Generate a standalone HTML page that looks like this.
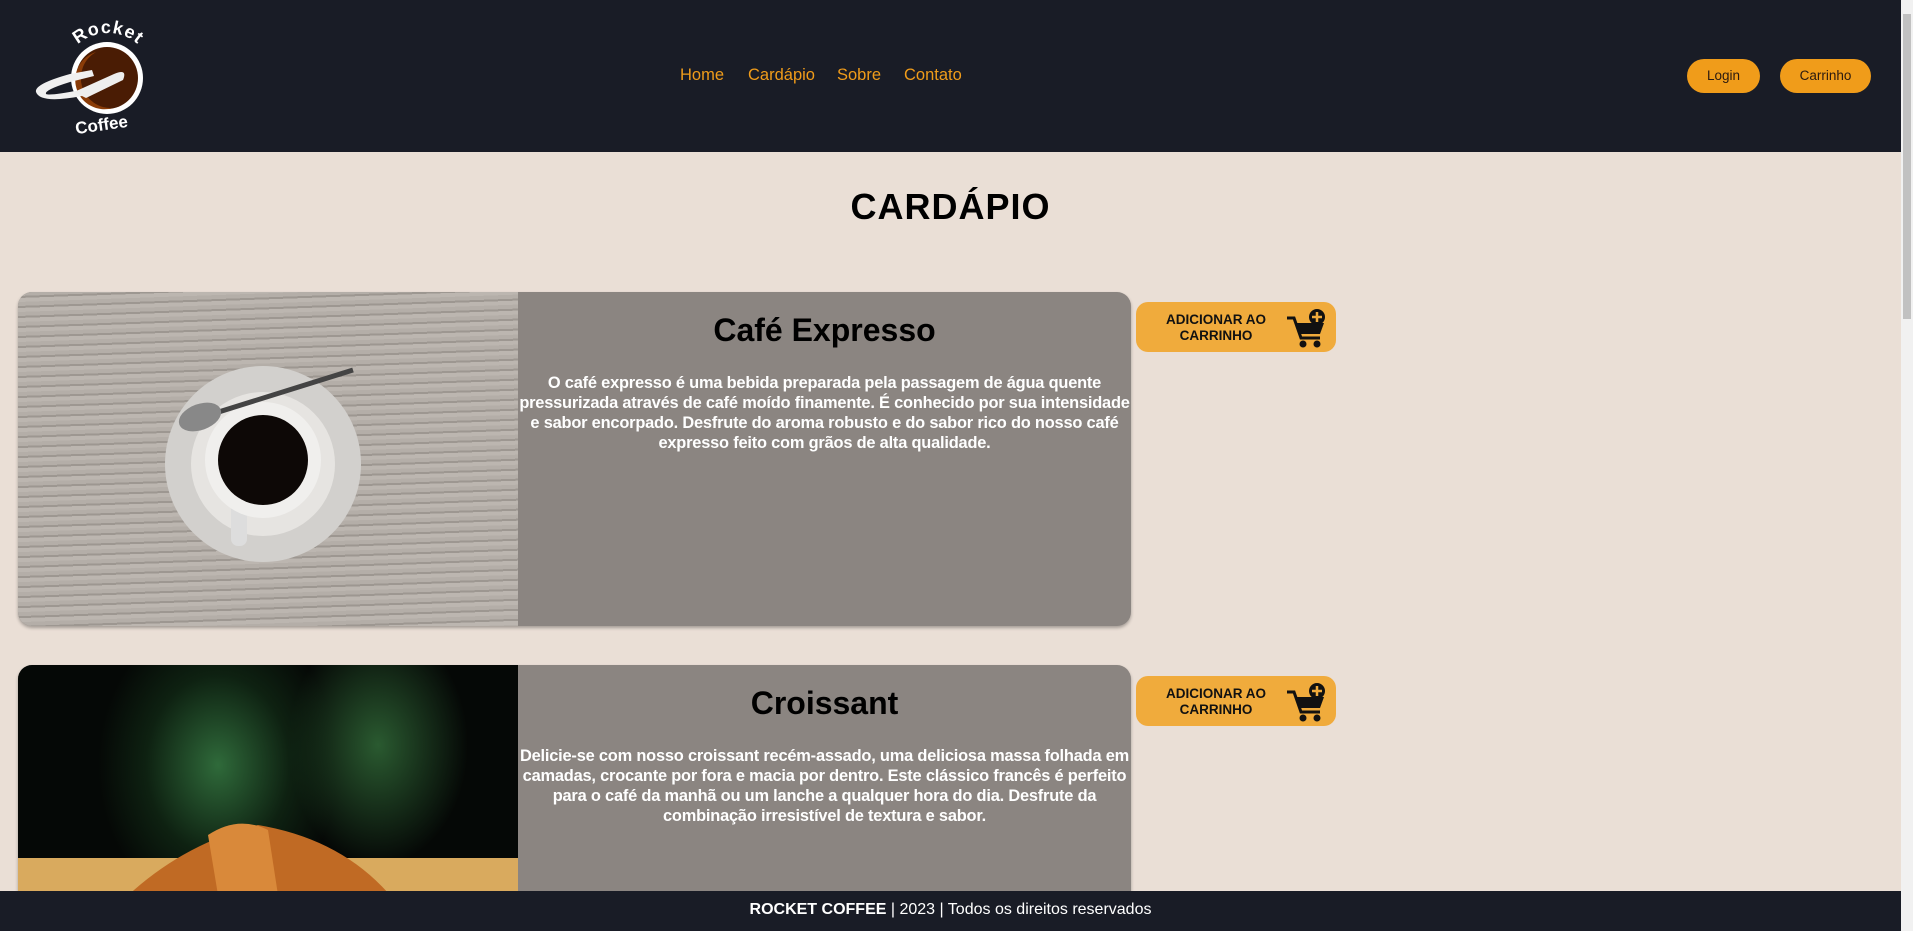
<!DOCTYPE html>
<html style="overflow:hidden;height:931px"><head><meta charset="utf-8"><style>
*{margin:0;padding:0;box-sizing:border-box}
body{width:1913px;height:931px;overflow:hidden;background:#eadfd6;font-family:"Liberation Sans",sans-serif;position:relative}
.hdr{position:absolute;left:0;top:0;width:1901px;height:152px;background:#191c26}
.nav{position:absolute;top:66px;font-size:16.5px;color:#f09c1a}
.btn{position:absolute;top:59px;height:34px;border-radius:17px;background:#f09c1a;color:#2a1a10;font-size:13.5px;text-align:center;line-height:34px}
.sb{position:absolute;left:1901px;top:0;width:12px;height:931px;background:#f1f1f1}
.sb i{position:absolute;left:2px;top:14px;width:8px;height:305px;background:#c1c1c1}
h1{position:absolute;left:0;width:1901px;top:186px;text-align:center;font-size:36px;font-weight:900;letter-spacing:1px;color:#000}
.card{position:absolute;left:18px;width:1113px;height:334px;background:#8b8581;border-radius:14px;overflow:hidden;box-shadow:0 2px 3px rgba(0,0,0,.3)}
.img{position:absolute;left:0;top:0;width:500px;height:334px}
.txt{position:absolute;left:500px;top:0;width:613px;text-align:center}
.txt h2{font-size:32px;font-weight:900;color:#000;margin-top:20px;height:61px}
.txt p{font-size:16.4px;font-weight:bold;color:#fff;line-height:20px;white-space:nowrap;letter-spacing:-.2px}
.add{position:absolute;left:1136px;width:200px;height:50px;background:#f0ab3c;border-radius:12px}
.add span{position:absolute;left:10px;top:10px;width:140px;text-align:center;font-size:13.5px;font-weight:bold;line-height:16px;color:#111}
.add svg{position:absolute;left:148px;top:4px}
.ft{position:absolute;left:0;top:891px;width:1901px;height:40px;background:#191c26;color:#fff;text-align:center;font-size:16px;line-height:38px}
</style></head><body>
<div class="hdr">
<svg style="position:absolute;left:30px;top:12px" width="120" height="125" viewBox="0 0 120 125">
<defs><path id="ta" d="M 33 66 A 45 45 0 0 1 123 66"/></defs>
<circle cx="77" cy="66" r="36" fill="#fff"/>
<circle cx="77" cy="66" r="31" fill="#4a1c04"/>
<path d="M66 40 A30 30 0 0 0 83 96 A27 27 0 0 1 66 40Z" fill="#8a3c08"/>
<path d="M6 80 Q4 72 40 62 L62 58 L64 64 L40 70 Q14 78 16 82 Q20 84 50 78 L52 84 Q10 92 6 80Z" fill="#f0f0f0"/>
<path d="M44 80 L84 62 Q98 56 93 68 L56 86Z" fill="#eee"/>
<text font-family="Liberation Sans" font-weight="bold" font-size="18" fill="#fff" text-anchor="middle" letter-spacing="1"><textPath href="#ta" startOffset="50%">Rocket</textPath></text>
<text x="45" y="118" font-family="Liberation Sans" font-weight="bold" font-size="17" fill="#fff" transform="rotate(-8 75 112)">Coffee</text>
</svg>
<div class="nav" style="left:680px">Home</div>
<div class="nav" style="left:748px">Cardápio</div>
<div class="nav" style="left:837px">Sobre</div>
<div class="nav" style="left:904px">Contato</div>
<div class="btn" style="left:1687px;width:73px">Login</div>
<div class="btn" style="left:1780px;width:91px">Carrinho</div>
</div>
<h1>CARDÁPIO</h1>

<div class="card" style="top:292px">
<div class="img" style="background:repeating-linear-gradient(178deg,#b4aea8 0 4px,#9d9791 4px 6px,#bcb6b0 6px 10px)">
<svg width="500" height="334" style="position:absolute;left:0;top:0">
<circle cx="245" cy="172" r="98" fill="#d2d0cd"/>
<circle cx="245" cy="172" r="72" fill="#e6e4e1"/>
<rect x="213" y="210" width="16" height="44" rx="7" fill="#ddd"/>
<circle cx="245" cy="168" r="58" fill="#f0efed"/>
<circle cx="245" cy="168" r="45" fill="#0d0806"/>
<path d="M175 128 L335 78" stroke="#444" stroke-width="5"/>
<ellipse cx="182" cy="125" rx="22" ry="13" transform="rotate(-20 182 125)" fill="#888"/>
</svg></div>
<div class="txt"><h2>Café Expresso</h2>
<p>O café expresso é uma bebida preparada pela passagem de água quente<br>pressurizada através de café moído finamente. É conhecido por sua intensidade<br>e sabor encorpado. Desfrute do aroma robusto e do sabor rico do nosso café<br>expresso feito com grãos de alta qualidade.</p></div>
</div>
<div class="add" style="top:302px"><span>ADICIONAR AO<br>CARRINHO</span>
<svg width="44" height="44" viewBox="0 0 44 44"><path d="M3 12 L10 12 L17 32 L36 32" fill="none" stroke="#111" stroke-width="3"/><path d="M12 17 L40 17 L36 28 L16 28Z" fill="#111"/><circle cx="19" cy="38" r="3.5" fill="#111"/><circle cx="33" cy="38" r="3.5" fill="#111"/><circle cx="33" cy="11" r="8" fill="#111"/><path d="M33 6v10M28 11h10" stroke="#f0ab3c" stroke-width="2.5"/></svg></div>

<div class="card" style="top:665px;height:226px;border-radius:14px 14px 0 0">
<div class="img" style="height:226px;background:radial-gradient(ellipse 120px 150px at 200px 100px,#2f6a3a,rgba(20,50,25,.6) 60%,transparent),radial-gradient(ellipse 90px 120px at 360px 80px,#2a5a30,transparent),#050806">
<svg width="500" height="226" style="position:absolute;left:0;top:0"><rect x="0" y="193" width="500" height="40" fill="#d9aa5e"/>
<path d="M100 240 Q160 180 240 160 Q330 175 380 240Z" fill="#c06a24"/><path d="M190 170 Q220 150 250 165 L260 230 L200 230Z" fill="#d9893a"/></svg></div>
<div class="txt"><h2>Croissant</h2>
<p>Delicie-se com nosso croissant recém-assado, uma deliciosa massa folhada em<br>camadas, crocante por fora e macia por dentro. Este clássico francês é perfeito<br>para o café da manhã ou um lanche a qualquer hora do dia. Desfrute da<br>combinação irresistível de textura e sabor.</p></div>
</div>
<div class="add" style="top:676px"><span>ADICIONAR AO<br>CARRINHO</span>
<svg width="44" height="44" viewBox="0 0 44 44"><path d="M3 12 L10 12 L17 32 L36 32" fill="none" stroke="#111" stroke-width="3"/><path d="M12 17 L40 17 L36 28 L16 28Z" fill="#111"/><circle cx="19" cy="38" r="3.5" fill="#111"/><circle cx="33" cy="38" r="3.5" fill="#111"/><circle cx="33" cy="11" r="8" fill="#111"/><path d="M33 6v10M28 11h10" stroke="#f0ab3c" stroke-width="2.5"/></svg></div>

<div class="ft"><b>ROCKET COFFEE</b> | 2023 | Todos os direitos reservados</div>
<div class="sb"><i></i></div>
</body></html>
